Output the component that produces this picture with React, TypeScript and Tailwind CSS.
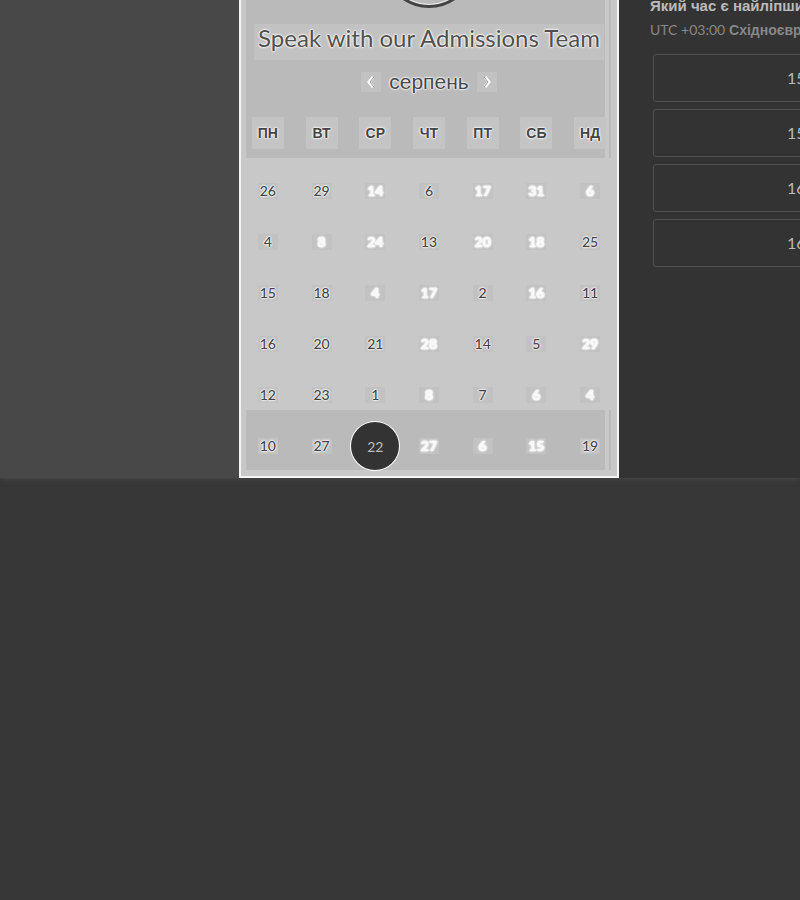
import React from "react";

type Day = { n: number; open?: boolean };

const d = (n: number): Day => ({ n, open: true });
const x = (n: number): Day => ({ n });

const weekdays = ["ПН", "ВТ", "СР", "ЧТ", "ПТ", "СБ", "НД"];
const weeks: Day[][] = [
  [d(26), d(29), x(14), d(6), x(17), x(31), x(6)],
  [d(4), x(8), x(24), d(13), x(20), x(18), d(25)],
  [d(15), d(18), x(4), x(17), d(2), x(16), d(11)],
  [d(16), d(20), d(21), x(28), d(14), d(5), x(29)],
  [d(12), d(23), d(1), x(8), d(7), x(6), x(4)],
  [d(10), d(27), d(22), x(27), x(6), x(15), d(19)],
];
const times = ["15:00", "15:30", "16:00", "16:30"];

const halo = "[text-shadow:0_0_1px_#fff,0_0_2px_#fff,0_0_2px_#fff,0_0_3px_#eee]";
const band =
  "bg-[linear-gradient(to_right,#c8c8c8_5px,#bababa_5px,#bababa_calc(100%_-_12px),#c8c8c8_calc(100%_-_12px),#c8c8c8_calc(100%_-_8px),#bababa_calc(100%_-_8px),#bababa_calc(100%_-_6px),#c8c8c8_calc(100%_-_6px))]";

function DayButton({ day, last }: { day: Day; last: boolean }) {
  if (last && day.n === 22) {
    return (
      <button
        aria-pressed="true"
        className="mx-auto block size-12 rounded-full bg-[#333] text-[#bbb] shadow-[0_0_0_1px_#fff]"
      >
        22
      </button>
    );
  }
  return (
    <button
      disabled={!day.open}
      className={`mx-auto block ${last ? "h-12" : "h-5"} ${
        day.open ? "font-medium text-[#444]" : "font-bold text-[#f8f8f8]"
      }`}
    >
      <span className={`block w-5 bg-[#c2c2c2] leading-4 ${halo}`}>{day.n}</span>
    </button>
  );
}

function Calendar() {
  return (
    <section className="flex w-[380px] shrink-0 flex-col border-x-2 border-b-2 border-[#f4f4f4] bg-[#c8c8c8] pb-1.5">
      <header className={`flex flex-col items-center ${band}`}>
        <div className="flex h-2 items-end overflow-hidden">
          <div className="size-[92px] shrink-0 rounded-full border-3 border-[#444] shadow-[inset_0_0_0_1px_#eee]" />
        </div>
        <h1
          className={`mt-4 whitespace-nowrap bg-[#c2c2c2] px-1 pb-2 font-['Lato',sans-serif] text-[24px] leading-7 text-[#505050] ${halo}`}
        >
          Speak with our Admissions Team
        </h1>
        <div className="mt-1 flex h-9 items-center gap-2 text-[#484848]">
          <button aria-label="Попередній місяць" className="flex size-5 items-center justify-center bg-[#c2c2c2]">
            <svg viewBox="0 0 10 12" className="h-3 w-2.5" fill="none">
              <path d="M7 1 3 6l4 5" stroke="#fff" strokeWidth="3" />
              <path d="M8 1 4 6l4 5" stroke="#999" strokeWidth="1" />
            </svg>
          </button>
          <h2 className={`text-[21px] leading-8 font-normal ${halo}`}>серпень</h2>
          <button aria-label="Наступний місяць" className="flex size-5 items-center justify-center bg-[#c2c2c2]">
            <svg viewBox="0 0 10 12" className="h-3 w-2.5" fill="none">
              <path d="m3 1 4 5-4 5" stroke="#fff" strokeWidth="3" />
              <path d="m2 1 4 5-4 5" stroke="#999" strokeWidth="1" />
            </svg>
          </button>
        </div>
      </header>
      <table className="w-full table-fixed border-collapse text-center">
        <thead>
          <tr className={`h-[58px] ${band}`}>
            {weekdays.map((w) => (
              <th key={w} scope="col" className="p-0 pt-2 align-middle">
                <span
                  className={`mx-auto block w-8 bg-[#c4c4c4] text-[14px] leading-8 font-bold text-[#444] ${halo}`}
                >
                  {w}
                </span>
              </th>
            ))}
          </tr>
        </thead>
        <tbody className="font-['Lato',sans-serif] text-[14px]">
          {weeks.map((week, i) => {
            const last = i === weeks.length - 1;
            const height = last ? `h-[60px] ${band}` : i === 0 ? "h-12" : "h-[51px]";
            return (
              <tr key={i} className={height}>
                {week.map((day, j) => (
                  <td key={j} className={`p-0 align-bottom ${last ? "" : "pb-[5px]"}`}>
                    <DayButton day={day} last={last} />
                  </td>
                ))}
              </tr>
            );
          })}
        </tbody>
      </table>
    </section>
  );
}

function TimeSlots() {
  return (
    <section className="min-w-0 flex-1 overflow-hidden bg-[#333] pl-[31px]">
      <h2 className="-mt-1 whitespace-nowrap text-[15px] leading-5 font-bold text-[#bbb]">
        Який час є найліпший?
      </h2>
      <p className="mt-1 whitespace-nowrap text-[14px] leading-5 text-[#888]">
        <span className="font-['Lato',sans-serif]">UTC +03:00</span>{" "}
        <span className="font-bold">Східноєвропейський час</span>
      </p>
      <div className="mt-3.5 flex w-[312px] flex-col gap-[7px] pl-[3px]">
        {times.map((t) => (
          <button
            key={t}
            className="h-12 rounded-[3px] border border-[#505050] font-['Lato',sans-serif] text-[16px] text-[#bbb]"
          >
            {t}
          </button>
        ))}
      </div>
    </section>
  );
}

export default function App() {
  return (
    <main className="min-h-screen overflow-hidden bg-[#373737] font-['Liberation_Sans',Arial,sans-serif]">
      <div className="flex shadow-[0_0_6px_#505050]">
        <div className="w-[239px] shrink-0 bg-[#484848]" />
        <Calendar />
        <TimeSlots />
      </div>
    </main>
  );
}
